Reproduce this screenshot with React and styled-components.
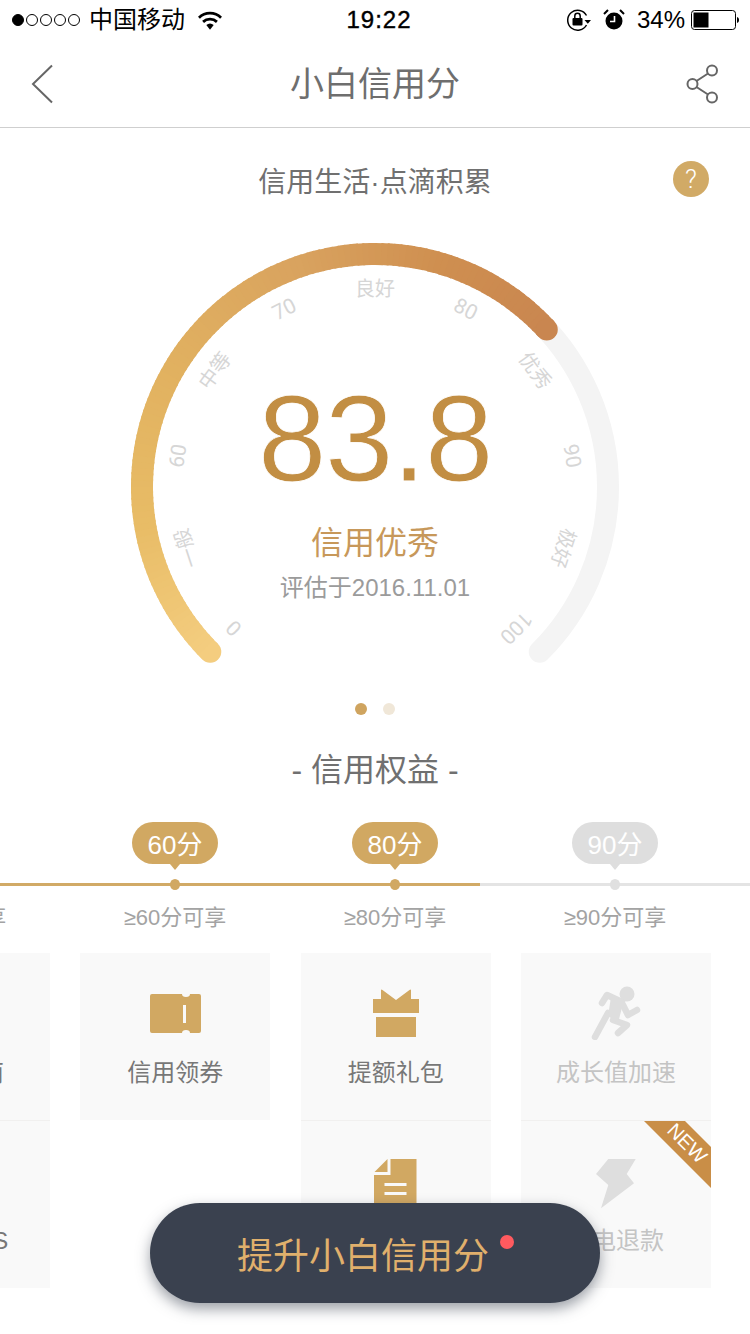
import React from "react";
import styled, { createGlobalStyle } from "styled-components";

const FONT = `"Liberation Sans", "Noto Sans CJK SC", sans-serif`;

const Global = createGlobalStyle`
  html, body { margin: 0; padding: 0; background: #fff; }
  body { width: 750px; height: 1334px; overflow: hidden; font-family: ${FONT}; }
`;

const Page = styled.div`
  position: relative;
  width: 750px;
  height: 1334px;
  overflow: hidden;
  background: #fff;
  display: flex;
  flex-direction: column;
`;

const StatusBar = styled.div`
  height: 40px;
  display: grid;
  grid-template-columns: 1fr auto 1fr;
  align-items: center;
  color: #000;
  font-size: 24px;
`;
const StatusLeft = styled.div`
  display: flex;
  align-items: center;
  padding-left: 12px;
  gap: 9px;
`;
const Signal = styled.div`
  display: flex;
  gap: 2px;
`;
const SignalDot = styled.span`
  width: 12px;
  height: 12px;
  box-sizing: border-box;
  border-radius: 50%;
  border: 1px solid #000;
  background: ${(p) => (p.$on ? "#000" : "transparent")};
`;
const Carrier = styled.span`
  font-size: 24px;
  line-height: 30px;
  margin: 0 4px 1px 0;
`;
const Clock = styled.div`
  font-size: 24px;
  -webkit-text-stroke: 0.4px #000;
  letter-spacing: 1px;
  margin-left: 8px;
`;
const StatusRight = styled.div`
  display: flex;
  align-items: center;
  justify-content: flex-end;
  gap: 12px;
  padding-right: 11px;
`;
const Percent = styled.span`
  font-size: 24px;
  margin-right: -6px;
`;

const NavBar = styled.div`
  height: 87px;
  border-bottom: 1px solid #cfcfcf;
  display: grid;
  grid-template-columns: 1fr auto 1fr;
  align-items: center;
  padding: 0 30px;
`;
const NavEnd = styled.div`
  display: flex;
  justify-content: ${(p) => (p.$right ? "flex-end" : "flex-start")};
`;
const NavTitle = styled.div`
  font-size: 34px;
  line-height: 84px;
  color: #6e6e6e;
`;

const Slogan = styled.div`
  position: relative;
  height: 106px;
  display: flex;
  justify-content: center;
  padding-top: 35px;
  box-sizing: border-box;
  font-size: 28px;
  line-height: 40px;
  color: #707070;
`;
const Help = styled.div`
  position: absolute;
  top: 33px;
  right: 41px;
  width: 36px;
  height: 36px;
  border-radius: 50%;
  background: #d1aa66;
  color: #fff;
  font-family: Roboto, sans-serif;
  font-size: 26px;
  font-weight: 300;
  line-height: 36px;
  text-align: center;
`;

const GaugeWrap = styled.div`
  position: relative;
  width: 500px;
  height: 452px;
  margin: 9px auto 0;
  flex: none;
`;
const GaugeText = styled.div`
  position: absolute;
  left: 0;
  right: 0;
  top: 131px;
  display: flex;
  flex-direction: column;
  align-items: center;
`;
const Score = styled.div`
  font-family: "Liberation Sans", sans-serif;
  font-size: 123px;
  line-height: 130px;
  letter-spacing: -1.4px;
  color: #c28e43;
  -webkit-text-stroke: 0.8px #fff;
`;
const Level = styled.div`
  font-size: 32px;
  line-height: 44px;
  margin-top: 17px;
  color: #c7985a;
`;
const Dated = styled.div`
  font-size: 24px;
  line-height: 32px;
  margin-top: 7px;
  color: #9b9b9b;
`;

const Dots = styled.div`
  display: flex;
  justify-content: center;
  gap: 16px;
  margin-top: 8px;
`;
const Dot = styled.span`
  width: 12px;
  height: 12px;
  border-radius: 50%;
  background: ${(p) => (p.$on ? "#cfa45f" : "#f0e7d8")};
`;
const Heading = styled.div`
  margin-top: 33px;
  text-align: center;
  font-size: 32px;
  line-height: 44px;
  color: #707070;
`;

const Track = styled.div`
  position: relative;
  margin-top: 31px;
  height: 100px;
  flex: none;
`;
const TrackLine = styled.div`
  position: absolute;
  left: 0;
  right: 0;
  top: 60px;
  height: 3px;
  background: linear-gradient(to right, #d1aa66 480px, #e4e4e4 480px);
`;
const Milestone = styled.div`
  position: absolute;
  top: 0;
  left: ${(p) => p.$x}px;
  width: 220px;
  margin-left: -110px;
  display: flex;
  flex-direction: column;
  align-items: center;
`;
const Bubble = styled.div`
  position: relative;
  width: 86px;
  height: 42px;
  margin-top: -1px;
  border-radius: 21px;
  background: ${(p) => (p.$on ? "#d1a862" : "#dedede")};
  color: #fff;
  font-size: 26px;
  line-height: 47px;
  text-align: center;
  visibility: ${(p) => (p.$ghost ? "hidden" : "visible")};
  &::after {
    content: "";
    position: absolute;
    left: 50%;
    bottom: -6px;
    margin-left: -5px;
    border: 5px solid transparent;
    border-bottom: 0;
    border-top: 6px solid ${(p) => (p.$on ? "#d1a862" : "#dedede")};
  }
`;
const Node = styled.span`
  position: relative;
  margin-top: 15px;
  width: 10px;
  height: 11px;
  border-radius: 50%;
  background: ${(p) => (p.$on ? "#d1a862" : "#e0e0e0")};
`;
const Need = styled.div`
  margin-top: 13px;
  font-size: 22px;
  line-height: 30px;
  color: #a3a3a3;
  white-space: nowrap;
`;

const Grid = styled.div`
  display: flex;
  gap: 30.33px;
  margin: 30px 0 0 -140px;
  flex: none;
`;
const Column = styled.div`
  width: 190px;
  display: flex;
  flex-direction: column;
`;
const Card = styled.div`
  position: relative;
  height: 167px;
  background: #f9f9f9;
  overflow: hidden;
  display: flex;
  flex-direction: column;
  align-items: center;
  & + & {
    border-top: 1px solid #f1f0ef;
  }
`;
const IconBox = styled.div`
  box-sizing: border-box;
  height: 62px;
  margin-top: 29px;
  padding-top: ${(p) => (p.$low ? 5 : 0)}px;
  display: flex;
  align-items: center;
  justify-content: center;
`;
const CardLabel = styled.div`
  margin-top: 12px;
  padding-left: ${(p) => (p.$nudge ? 2 : 0)}px;
  font-size: 24px;
  line-height: 34px;
  white-space: nowrap;
  color: ${(p) => (p.$off ? "#c4c4c4" : "#777")};
`;
const Ribbon = styled.div`
  position: absolute;
  top: 8px;
  right: -36px;
  width: 120px;
  height: 29px;
  background: #c98e47;
  color: #fff;
  transform: rotate(45deg);
  font-size: 20px;
  line-height: 29px;
  text-align: center;
`;

const Cta = styled.div`
  position: absolute;
  left: 150px;
  top: 1203px;
  width: 450px;
  height: 100px;
  box-sizing: border-box;
  padding-right: 24px;
  border-radius: 50px;
  background: #3a414f;
  box-shadow: 0 6px 14px rgba(58, 65, 79, 0.5);
  display: flex;
  align-items: center;
  justify-content: center;
  color: #e0b06c;
  font-size: 36px;
`;
const CtaLabel = styled.span`
  position: relative;
`;
const RedDot = styled.span`
  position: absolute;
  right: -25px;
  top: 8px;
  width: 14px;
  height: 14px;
  border-radius: 50%;
  background: #ff5a5f;
`;

const polar = (deg, r) => {
  const a = ((deg - 90) * Math.PI) / 180;
  return [250 + r * Math.cos(a), 244 + r * Math.sin(a)];
};
const arc = (from, to, r) => {
  const [x1, y1] = polar(from, r);
  const [x2, y2] = polar(to, r);
  const large = to - from > 180 ? 1 : 0;
  return `M${x1.toFixed(2)} ${y1.toFixed(2)}A${r} ${r} 0 ${large} 1 ${x2.toFixed(2)} ${y2.toFixed(2)}`;
};

const ticks = ["0", "一般", "60", "中等", "70", "良好", "80", "优秀", "90", "极好", "100"];
const END = 47.5;

const Gauge = () => {
  const stops = [
    [-135, "#f4cd7f"],
    [-100, "#e8bc66"],
    [-60, "#e1b160"],
    [-20, "#d9a35f"],
    [15, "#cf8f50"],
    [END, "#c98650"],
  ];
  const mix = (a, b, t) => {
    const ca = [1, 3, 5].map((i) => parseInt(a.slice(i, i + 2), 16));
    const cb = [1, 3, 5].map((i) => parseInt(b.slice(i, i + 2), 16));
    return `rgb(${ca.map((v, i) => Math.round(v + (cb[i] - v) * t)).join(",")})`;
  };
  const colourAt = (d) => {
    for (let i = 0; i < stops.length - 1; i++) {
      if (d <= stops[i + 1][0]) {
        return mix(stops[i][1], stops[i + 1][1], (d - stops[i][0]) / (stops[i + 1][0] - stops[i][0]));
      }
    }
    return stops[stops.length - 1][1];
  };
  const segments = [];
  for (let d = -135; d < END; d += 1.5) {
    segments.push(
      <path key={d} d={arc(d, Math.min(d + 2, END), 233)} fill="none" stroke={colourAt(d)} strokeWidth="22" />
    );
  }
  const [sx, sy] = polar(-135, 233);
  const [ex, ey] = polar(END, 233);
  return (
    <svg width="500" height="452" viewBox="0 0 500 452">
      <path d={arc(-135, 135, 233)} fill="none" stroke="#f4f4f4" strokeWidth="22" strokeLinecap="round" />
      <circle cx={sx} cy={sy} r="11" fill="#f4cd7f" />
      {segments}
      <circle cx={ex} cy={ey} r="11" fill="#c98650" />
      {ticks.map((t, i) => {
        const deg = -135 + i * 27;
        const [x, y] = polar(deg, 199.5);
        const digit = /\d/.test(t);
        return (
          <text
            key={t}
            x={x}
            y={y}
            fontSize={digit ? 21 : 20}
            fill="#d6d6d6"
            textAnchor="middle"
            dominantBaseline="central"
            fontFamily={digit ? "Roboto, sans-serif" : `"Noto Sans CJK SC", sans-serif`}
            transform={`rotate(${deg} ${x} ${y})`}
          >
            {t}
          </text>
        );
      })}
    </svg>
  );
};

const G = "#d1a862";
const D = "#dedede";

const TicketIcon = () => (
  <svg width="51" height="39" viewBox="0 0 51 39">
    <path
      d="M2 0H32a4 3 0 0 0 8 0h9a2 2 0 0 1 2 2V37a2 2 0 0 1-2 2H40a4 3 0 0 0-8 0H2a2 2 0 0 1-2-2V2a2 2 0 0 1 2-2Z"
      fill={G}
    />
    <rect x="33" y="11" width="3" height="18" fill="#f9f9f9" />
  </svg>
);
const GiftIcon = () => (
  <svg width="46" height="48" viewBox="0 0 46 48">
    <path d="M0 10H8V1.500Q8 0 9.500 1L23 11 36.500 1Q38 0 38 1.500V10H46V24H0Z" fill={G} />
    <path d="M3 28H43V48H3Z" fill={G} />
  </svg>
);
const RunnerIcon = () => (
  <svg width="50" height="54" viewBox="0 0 50 54">
    <circle cx="36" cy="8" r="7.500" fill={D} />
    <g fill="none" stroke={D} strokeWidth="6.500" strokeLinecap="round" strokeLinejoin="round">
      <path d="M11 17 16 9 31 16" />
      <path d="M17 27 4 51" />
      <path d="M32 19 37 29 46 24" />
      <path d="M22 34 36 39 27 47" />
    </g>
    <path d="M20 11 33 14 27 37 17 30Z" fill={D} />
  </svg>
);
const DocIcon = () => (
  <svg width="43" height="50" viewBox="0 0 43 50">
    <path d="M16.500 0H42.500V50H0V16H16.500Z" fill={G} />
    <path d="M0.500 13 13.500 0V13Z" fill={G} />
    <rect x="10.500" y="24" width="22" height="3" fill="#f9f9f9" />
    <rect x="10.500" y="33" width="22" height="3" fill="#f9f9f9" />
  </svg>
);
const BoltIcon = () => (
  <svg width="40" height="50" viewBox="0 0 40 50">
    <path d="M12.300 0H39.700L30.700 15 38 24.300 5 49.300 12.300 26 0 15Z" fill={D} />
  </svg>
);

const WifiIcon = () => (
  <svg width="24" height="19" viewBox="0 0 26 20">
    <path d="M1 7a17 17 0 0 1 24 0" fill="none" stroke="#000" strokeWidth="3" />
    <path d="M5.500 11.500a11 11 0 0 1 15 0" fill="none" stroke="#000" strokeWidth="3" />
    <path d="M9 15a6 6 0 0 1 8 0l-4 5Z" fill="#000" />
  </svg>
);
const LockIcon = () => (
  <svg width="24" height="24" viewBox="0 0 24 24">
    <path d="M19.500 7.500A10 10 0 1 0 19.500 17" fill="none" stroke="#000" strokeWidth="1.500" />
    <path d="M17.500 12h6.500l-3.200 3.800Z" fill="#000" />
    <rect x="5.500" y="10" width="10" height="7.500" rx="1" fill="#000" />
    <path d="M7.800 10V8a2.700 2.700 0 0 1 5.400 0v2" fill="none" stroke="#000" strokeWidth="1.500" />
  </svg>
);
const AlarmIcon = () => (
  <svg width="22" height="22" viewBox="0 0 22 22">
    <circle cx="11" cy="12" r="8.500" fill="#000" />
    <path d="M11.500 7v5.500H7" fill="none" stroke="#fff" strokeWidth="1.600" />
    <path d="M1 5 5 1M21 5 17 1" stroke="#000" strokeWidth="2" />
  </svg>
);
const BatteryIcon = () => (
  <svg width="48" height="20" viewBox="0 0 48 20">
    <rect x="0.500" y="0.500" width="44" height="19" rx="3" fill="none" stroke="#000" />
    <rect x="2.500" y="2.500" width="15" height="15" fill="#000" />
    <path d="M46 7c1.300.3 2 1.500 2 3s-.7 2.700-2 3Z" fill="#000" />
  </svg>
);
const BackIcon = () => (
  <svg width="24" height="40" viewBox="0 0 24 40">
    <path d="M22 1.500 3 20l19 18.500" fill="none" stroke="#666" strokeWidth="2" />
  </svg>
);
const ShareIcon = () => (
  <svg width="34" height="40" viewBox="0 0 34 40">
    <g fill="none" stroke="#666" strokeWidth="2">
      <circle cx="26" cy="6.500" r="5" />
      <circle cx="26" cy="33.500" r="5" />
      <circle cx="6.500" cy="20" r="5" />
      <path d="M10.500 17 22 9.500M10.500 23 22 30.500" />
    </g>
  </svg>
);

export default function App() {
  return (
    <Page>
      <Global />
      <StatusBar>
        <StatusLeft>
          <Signal>
            <SignalDot $on />
            <SignalDot />
            <SignalDot />
            <SignalDot />
            <SignalDot />
          </Signal>
          <Carrier>中国移动</Carrier>
          <WifiIcon />
        </StatusLeft>
        <Clock>19:22</Clock>
        <StatusRight>
          <LockIcon />
          <AlarmIcon />
          <Percent>34%</Percent>
          <BatteryIcon />
        </StatusRight>
      </StatusBar>
      <NavBar>
        <NavEnd>
          <BackIcon />
        </NavEnd>
        <NavTitle>小白信用分</NavTitle>
        <NavEnd $right>
          <ShareIcon />
        </NavEnd>
      </NavBar>
      <Slogan>
        信用生活·点滴积累
        <Help>?</Help>
      </Slogan>
      <GaugeWrap>
        <Gauge />
        <GaugeText>
          <Score>83.8</Score>
          <Level>信用优秀</Level>
          <Dated>评估于2016.11.01</Dated>
        </GaugeText>
      </GaugeWrap>
      <Dots>
        <Dot $on />
        <Dot />
      </Dots>
      <Heading>- 信用权益 -</Heading>
      <Track>
        <TrackLine />
        <Milestone $x={-45}>
          <Bubble $on $ghost />
          <Node $on />
          <Need>≥40分可享</Need>
        </Milestone>
        <Milestone $x={175}>
          <Bubble $on>60分</Bubble>
          <Node $on />
          <Need>≥60分可享</Need>
        </Milestone>
        <Milestone $x={395}>
          <Bubble $on>80分</Bubble>
          <Node $on />
          <Need>≥80分可享</Need>
        </Milestone>
        <Milestone $x={615}>
          <Bubble>90分</Bubble>
          <Node />
          <Need>≥90分可享</Need>
        </Milestone>
      </Track>
      <Grid>
        <Column>
          <Card>
            <IconBox />
            <CardLabel $nudge>信用指南</CardLabel>
          </Card>
          <Card>
            <IconBox />
            <CardLabel>免押金OS</CardLabel>
          </Card>
        </Column>
        <Column>
          <Card>
            <IconBox>
              <TicketIcon />
            </IconBox>
            <CardLabel>信用领券</CardLabel>
          </Card>
        </Column>
        <Column>
          <Card>
            <IconBox>
              <GiftIcon />
            </IconBox>
            <CardLabel>提额礼包</CardLabel>
          </Card>
          <Card>
            <IconBox $low>
              <DocIcon />
            </IconBox>
            <CardLabel>专属账单</CardLabel>
          </Card>
        </Column>
        <Column>
          <Card>
            <IconBox>
              <RunnerIcon />
            </IconBox>
            <CardLabel $off>成长值加速</CardLabel>
          </Card>
          <Card>
            <IconBox $low>
              <BoltIcon />
            </IconBox>
            <CardLabel $off>闪电退款</CardLabel>
            <Ribbon>NEW</Ribbon>
          </Card>
        </Column>
      </Grid>
      <Cta>
        <CtaLabel>
          提升小白信用分
          <RedDot />
        </CtaLabel>
      </Cta>
    </Page>
  );
}
